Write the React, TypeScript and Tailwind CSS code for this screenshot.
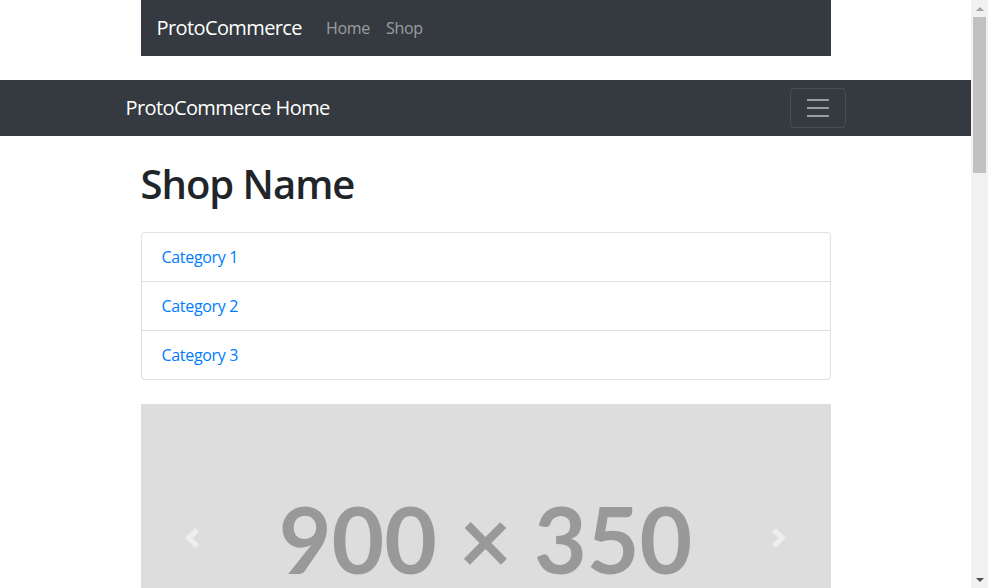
function Chevron({ dir }: { dir: "prev" | "next" }) {
  return (
    <svg viewBox="0 0 8 8" fill="#fff" className="w-5 h-5">
      {dir === "prev" ? (
        <path d="M5.25 0l-4 4 4 4 1.5-1.5-2.5-2.5 2.5-2.5-1.5-1.5z" />
      ) : (
        <path d="M2.75 0l-1.5 1.5 2.5 2.5-2.5 2.5 1.5 1.5 4-4-4-4z" />
      )}
    </svg>
  );
}

// classic browser scrollbar drawn beside the page
function Scrollbar() {
  return (
    <div className="w-[17px] shrink-0 bg-[#f1f1f1] flex flex-col items-center">
      <div className="h-[17px] flex items-center justify-center">
        <svg viewBox="0 0 8 4" className="w-2 h-1">
          <path d="M0 4L4 0l4 4z" fill="#a3a3a3" />
        </svg>
      </div>
      <div className="w-[13px] h-[156px] bg-[#c1c1c1]" />
      <div className="flex-1" />
      <div className="h-[17px] flex items-center justify-center">
        <svg viewBox="0 0 8 4" className="w-2 h-1">
          <path d="M0 0h8L4 4z" fill="#505050" />
        </svg>
      </div>
    </div>
  );
}

export default function App() {
  return (
    <div className="h-[588px] flex overflow-hidden bg-white text-[#212529] font-['Open_Sans',sans-serif] text-base leading-6 tracking-[-0.02em]">
      <div className="flex-1 min-w-0 overflow-hidden">
        {/* top navbar inside container */}
        <div className="max-w-[720px] mx-auto px-[15px] mb-6">
          <nav className="h-14 bg-[#343a40] px-4 flex items-center">
            <a className="text-white text-xl leading-[30px] tracking-[-0.03em] mr-4">ProtoCommerce</a>
            <a className="px-2 text-white/50">Home</a>
            <a className="px-2 text-white/50">Shop</a>
          </nav>
        </div>

        {/* full-width navbar */}
        <nav className="bg-[#343a40] py-2">
          <div className="w-[720px] mx-auto flex items-center justify-between">
            <a className="text-white text-xl leading-[30px] tracking-[-0.03em]">ProtoCommerce Home</a>
            <button className="px-3 py-1 border border-white/10 rounded flex items-center">
              <svg viewBox="0 0 30 30" className="w-[30px] h-[30px]">
                <path d="M4 7h22M4 15h22M4 23h22" stroke="rgba(255,255,255,0.5)" strokeWidth="2" />
              </svg>
            </button>
          </div>
        </nav>

        <main className="max-w-[720px] mx-auto px-[15px]">
          <h1 className="text-[40px] leading-[48px] font-semibold tracking-[-0.025em] my-6">Shop Name</h1>

          <div className="border border-black/[0.125] rounded divide-y divide-black/[0.125]">
            {["Category 1", "Category 2", "Category 3"].map((c) => (
              <a key={c} className="block px-5 py-3 text-[#007bff]">
                {c}
              </a>
            ))}
          </div>

          <div className="relative my-6 h-[268px] bg-[#dddddd] flex items-center justify-center overflow-hidden">
            <span className="text-[#999999] font-['Lato',sans-serif] font-bold text-[91px] leading-none tracking-normal">
              900 × 350
            </span>
            <div className="absolute left-0 top-0 bottom-0 w-[15%] flex items-center justify-center opacity-50">
              <Chevron dir="prev" />
            </div>
            <div className="absolute right-0 top-0 bottom-0 w-[15%] flex items-center justify-center opacity-50">
              <Chevron dir="next" />
            </div>
          </div>
        </main>
      </div>
      <Scrollbar />
    </div>
  );
}
